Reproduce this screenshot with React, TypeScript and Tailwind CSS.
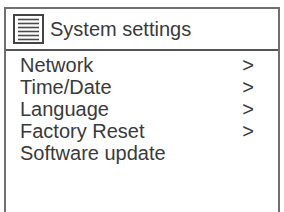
import React from "react"

const items = [
  { label: "Network", more: true },
  { label: "Time/Date", more: true },
  { label: "Language", more: true },
  { label: "Factory Reset", more: true },
  { label: "Software update", more: false },
]

function ListIcon() {
  return (
    <svg width="31" height="30" viewBox="0 0 31 30" className="shrink-0">
      <rect x="1" y="1" width="29" height="28" fill="none" stroke="#444" strokeWidth="2" />
      {[6, 10, 14, 18, 22, 26].map((y) => (
        <line key={y} x1="5" x2="26" y1={y - 0.5} y2={y - 0.5} stroke="#4a4a4a" strokeWidth="1.6" />
      ))}
    </svg>
  )
}

export default function App() {
  return (
    <div className="w-[284px] h-[212px] overflow-hidden bg-white pl-[4px] pt-[7px]" style={{ fontFamily: '"Liberation Sans", Arial, sans-serif' }}>
      <div className="w-[276px] h-[220px] border-2 border-[#707070] text-[#3a3a3a]">
        <div className="flex items-center gap-[6px] h-[42px] pl-[7px] border-b-2 border-[#555]">
          <ListIcon />
          <span className="text-[20px] leading-none">System settings</span>
        </div>
        <div className="pt-[3px] pl-[14px] pr-[24px]">
          {items.map((it) => (
            <div key={it.label} className="flex justify-between text-[20px] leading-[22px]">
              <span>{it.label}</span>
              {it.more && <span>&gt;</span>}
            </div>
          ))}
        </div>
      </div>
    </div>
  )
}
